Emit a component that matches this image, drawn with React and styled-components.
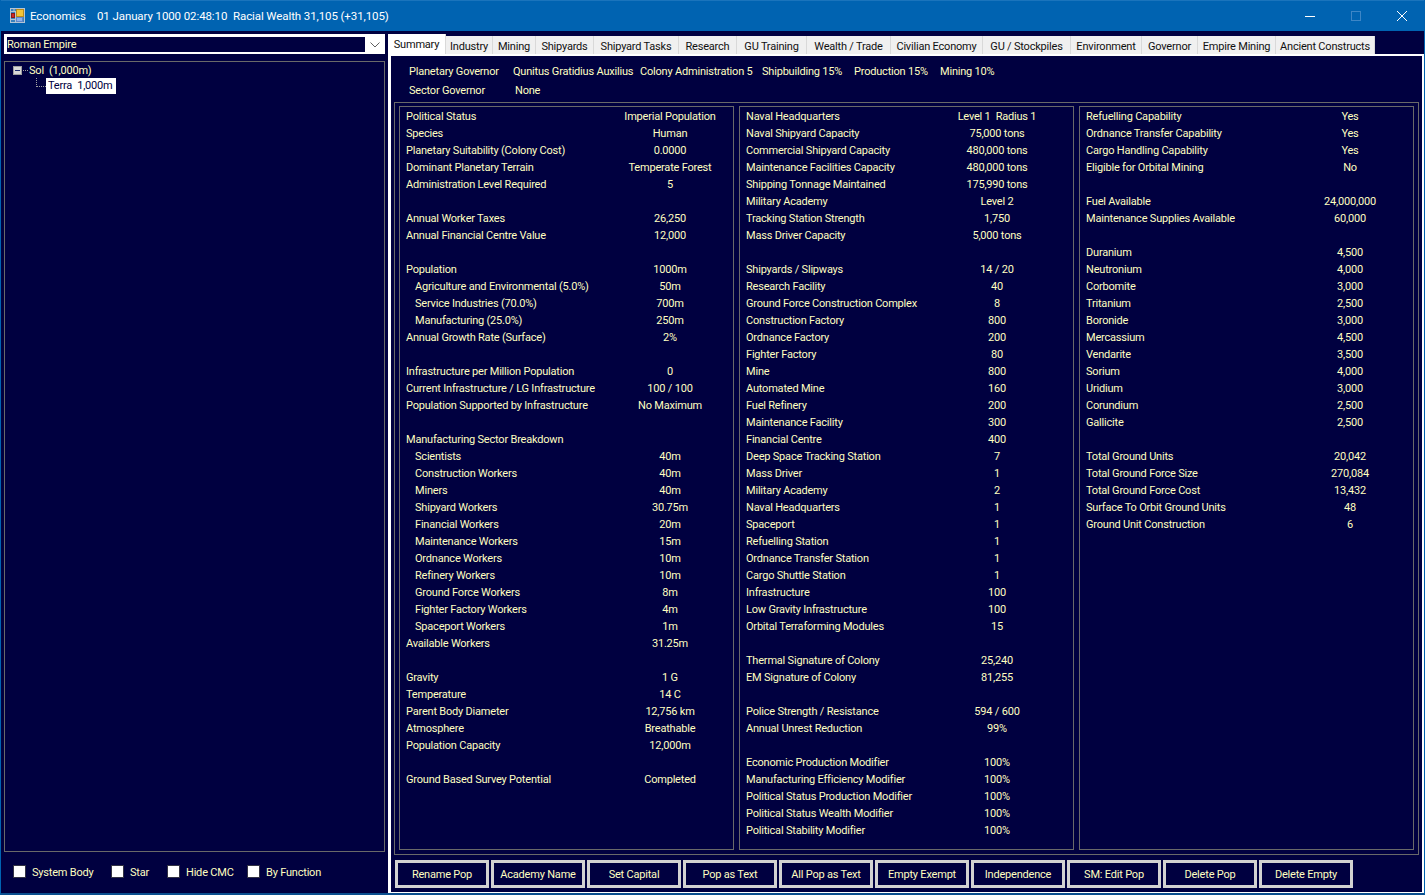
import React from 'react';
import styled, { createGlobalStyle } from 'styled-components';

const GlobalStyle = createGlobalStyle`
    html, body {
        margin: 0;
        padding: 0;
        background: #000040;
    }
    * {
        box-sizing: border-box;
    }
`;

const cream = '#FFFFC0';
const font = `Roboto, "Open Sans", sans-serif`;

const Window = styled.div`
    width: 1425px;
    height: 895px;
    display: flex;
    flex-direction: column;
    overflow: hidden;
    background: #000040;
    color: ${cream};
    font-family: ${font};
    font-size: 11px;
    letter-spacing: -0.2px;
    border-left: 1px solid #0063B1;
    border-right: 1px solid #0063B1;
    border-bottom: 2px solid #0A4F8F;
`;

const TitleBar = styled.header`
    height: 31px;
    margin: 0 -1px;
    flex: none;
    display: flex;
    align-items: center;
    padding-left: 10px;
    background: #0063B1;
    border-top: 1px solid #1A74BC;
    color: #FFFFFF;
    font-size: 11.5px;
    letter-spacing: -0.1px;
`;

const TitleIcon = styled.svg`
    width: 16px;
    height: 16px;
    margin-right: 4px;
`;

const TitlePart = styled.span`
    width: ${p => p.$w}px;
    flex: none;
    white-space: nowrap;
`;

const WinControls = styled.div`
    margin-left: auto;
    display: flex;
    height: 100%;
`;

const WinButton = styled.div`
    width: 46px;
    display: flex;
    align-items: center;
    justify-content: center;
`;

const Body = styled.div`
    flex: 1;
    min-height: 0;
    display: flex;
`;

const LeftPane = styled.aside`
    width: 387px;
    flex: none;
    display: flex;
    flex-direction: column;
    padding: 3px 3px 0 3px;
`;

const Combo = styled.div`
    height: 20px;
    flex: none;
    display: flex;
    background: #FFFFFF;
    padding: 3px 0 2px 3px;
`;

const ComboText = styled.div`
    flex: 1;
    background: #000040;
    line-height: 15px;
    white-space: nowrap;
`;

const ComboArrow = styled.div`
    width: 20px;
    display: flex;
    align-items: center;
    justify-content: center;
`;

const Tree = styled.div`
    flex: 1;
    margin-top: 7px;
    border: 1px solid #696969;
`;

const TreeRoot = styled.div`
    height: 16px;
    display: flex;
    align-items: center;
    padding-left: 8px;
`;

const Expander = styled.div`
    width: 9px;
    height: 9px;
    flex: none;
    display: flex;
    align-items: center;
    justify-content: center;
    background: #D8D8D8;
    border: 1px solid #A0A0A0;

    &::after {
        content: '';
        width: 5px;
        height: 1px;
        background: #1A2A6C;
    }
`;

const RootDots = styled.div`
    width: 5px;
    margin: 0 1px 0 1px;
    border-top: 1px dotted #A0A0A0;
`;

const RootLabel = styled.span`
    white-space: pre;
`;

const TreeChild = styled.div`
    display: flex;
    align-items: flex-start;
    padding-left: 31px;
`;

const ChildDots = styled.div`
    width: 10px;
    height: 9px;
    border-left: 1px dotted #A0A0A0;
    border-bottom: 1px dotted #A0A0A0;
`;

const Selected = styled.div`
    width: 70px;
    height: 16px;
    padding-left: 2px;
    line-height: 16px;
    background: #FFFFFF;
    color: #000040;
    white-space: pre;
`;

const CheckRow = styled.div`
    height: 41px;
    flex: none;
    display: flex;
    align-items: center;
    padding: 0 0 2px 9px;
`;

const CheckItem = styled.label`
    width: ${p => p.$w}px;
    flex: none;
    display: flex;
    align-items: center;
    white-space: nowrap;
`;

const CheckBox = styled.span`
    width: 13px;
    height: 13px;
    flex: none;
    margin-right: 6px;
    background: #FFFFFF;
    border: 1px solid #333344;
`;

const CheckText = styled.span`
    padding-top: 2px;
`;

const RightPane = styled.main`
    flex: 1;
    min-width: 0;
    display: flex;
    flex-direction: column;
`;

const TabStrip = styled.nav`
    height: 23px;
    flex: none;
    display: flex;
    align-items: flex-end;
`;

const Tab = styled.div`
    width: ${p => p.$w}px;
    height: ${p => (p.$active ? 20 : 18)}px;
    flex: none;
    display: flex;
    align-items: center;
    justify-content: center;
    padding-top: ${p => (p.$active ? 0 : 2)}px;
    background: ${p => (p.$active ? '#FFFFFF' : '#F0F0F0')};
    border-right: 1px solid #D9D9D9;
    color: #101010;
    white-space: nowrap;
`;

const Page = styled.section`
    flex: 1;
    min-height: 0;
    display: flex;
    flex-direction: column;
    border-style: solid;
    border-color: #FFFFFF;
    border-width: 2px 2px 1px 3px;
    padding: 0 3px;
`;

const GovernorBlock = styled.div`
    height: 46px;
    flex: none;
    padding: 6px 0 0 15px;
`;

const GovernorRow = styled.div`
    height: 19px;
    display: grid;
    grid-template-columns: 104px 127px 122px 92px 86px auto;
    align-items: center;
    white-space: nowrap;
`;

const GovernorName = styled.span`
    padding-left: 2px;
`;

const Group = styled.div`
    height: 753px;
    flex: none;
    display: flex;
    gap: 5px;
    padding: 3px 4px 4px;
    border: 1px solid #696969;
`;

const Panel = styled.div`
    width: 335px;
    flex: none;
    padding: 1px 0 0 6px;
    border: 1px solid #696969;
`;

const Row = styled.div`
    height: 17px;
    display: grid;
    grid-template-columns: minmax(0, 1fr) ${p => p.$valueWidth}px;
    align-items: center;
    white-space: nowrap;
`;

const Label = styled.span`
    padding-left: ${p => (p.$indent ? 9 : 0)}px;
`;

const Value = styled.span`
    text-align: center;
    white-space: pre;
`;

const ButtonRow = styled.div`
    display: flex;
    gap: 2px;
    margin-top: 5px;
    padding-left: 1px;
`;

const ActionButton = styled.button`
    width: 94px;
    height: 28px;
    padding: 0;
    background: #000040;
    border: 3px solid #D2D2D2;
    color: ${cream};
    font-family: ${font};
    font-size: 11px;
    letter-spacing: -0.2px;
    white-space: nowrap;
`;

const tabs = [
    ['Summary', 58], ['Industry', 47], ['Mining', 43], ['Shipyards', 58],
    ['Shipyard Tasks', 85], ['Research', 58], ['GU Training', 70],
    ['Wealth / Trade', 84], ['Civilian Economy', 92], ['GU / Stockpiles', 88],
    ['Environment', 71], ['Governor', 56], ['Empire Mining', 78],
    ['Ancient Constructs', 99],
];

const buttons = [
    'Rename Pop', 'Academy Name', 'Set Capital', 'Pop as Text', 'All Pop as Text',
    'Empty Exempt', 'Independence', 'SM: Edit Pop', 'Delete Pop', 'Delete Empty',
];

const checks = [['System Body', 98], ['Star', 56], ['Hide CMC', 80], ['By Function', 130]];

// null is an empty line, a third item true indents the label
const col1 = [
    ['Political Status', 'Imperial Population'],
    ['Species', 'Human'],
    ['Planetary Suitability (Colony Cost)', '0.0000'],
    ['Dominant Planetary Terrain', 'Temperate Forest'],
    ['Administration Level Required', '5'],
    null,
    ['Annual Worker Taxes', '26,250'],
    ['Annual Financial Centre Value', '12,000'],
    null,
    ['Population', '1000m'],
    ['Agriculture and Environmental (5.0%)', '50m', true],
    ['Service Industries (70.0%)', '700m', true],
    ['Manufacturing (25.0%)', '250m', true],
    ['Annual Growth Rate (Surface)', '2%'],
    null,
    ['Infrastructure per Million Population', '0'],
    ['Current Infrastructure / LG Infrastructure', '100 / 100'],
    ['Population Supported by Infrastructure', 'No Maximum'],
    null,
    ['Manufacturing Sector Breakdown', ''],
    ['Scientists', '40m', true],
    ['Construction Workers', '40m', true],
    ['Miners', '40m', true],
    ['Shipyard Workers', '30.75m', true],
    ['Financial Workers', '20m', true],
    ['Maintenance Workers', '15m', true],
    ['Ordnance Workers', '10m', true],
    ['Refinery Workers', '10m', true],
    ['Ground Force Workers', '8m', true],
    ['Fighter Factory Workers', '4m', true],
    ['Spaceport Workers', '1m', true],
    ['Available Workers', '31.25m'],
    null,
    ['Gravity', '1 G'],
    ['Temperature', '14 C'],
    ['Parent Body Diameter', '12,756 km'],
    ['Atmosphere', 'Breathable'],
    ['Population Capacity', '12,000m'],
    null,
    ['Ground Based Survey Potential', 'Completed'],
];

const col2 = [
    ['Naval Headquarters', 'Level 1  Radius 1'],
    ['Naval Shipyard Capacity', '75,000 tons'],
    ['Commercial Shipyard Capacity', '480,000 tons'],
    ['Maintenance Facilities Capacity', '480,000 tons'],
    ['Shipping Tonnage Maintained', '175,990 tons'],
    ['Military Academy', 'Level 2'],
    ['Tracking Station Strength', '1,750'],
    ['Mass Driver Capacity', '5,000 tons'],
    null,
    ['Shipyards / Slipways', '14 / 20'],
    ['Research Facility', '40'],
    ['Ground Force Construction Complex', '8'],
    ['Construction Factory', '800'],
    ['Ordnance Factory', '200'],
    ['Fighter Factory', '80'],
    ['Mine', '800'],
    ['Automated Mine', '160'],
    ['Fuel Refinery', '200'],
    ['Maintenance Facility', '300'],
    ['Financial Centre', '400'],
    ['Deep Space Tracking Station', '7'],
    ['Mass Driver', '1'],
    ['Military Academy', '2'],
    ['Naval Headquarters', '1'],
    ['Spaceport', '1'],
    ['Refuelling Station', '1'],
    ['Ordnance Transfer Station', '1'],
    ['Cargo Shuttle Station', '1'],
    ['Infrastructure', '100'],
    ['Low Gravity Infrastructure', '100'],
    ['Orbital Terraforming Modules', '15'],
    null,
    ['Thermal Signature of Colony', '25,240'],
    ['EM Signature of Colony', '81,255'],
    null,
    ['Police Strength / Resistance', '594 / 600'],
    ['Annual Unrest Reduction', '99%'],
    null,
    ['Economic Production Modifier', '100%'],
    ['Manufacturing Efficiency Modifier', '100%'],
    ['Political Status Production Modifier', '100%'],
    ['Political Status Wealth Modifier', '100%'],
    ['Political Stability Modifier', '100%'],
];

const col3 = [
    ['Refuelling Capability', 'Yes'],
    ['Ordnance Transfer Capability', 'Yes'],
    ['Cargo Handling Capability', 'Yes'],
    ['Eligible for Orbital Mining', 'No'],
    null,
    ['Fuel Available', '24,000,000'],
    ['Maintenance Supplies Available', '60,000'],
    null,
    ['Duranium', '4,500'],
    ['Neutronium', '4,000'],
    ['Corbomite', '3,000'],
    ['Tritanium', '2,500'],
    ['Boronide', '3,000'],
    ['Mercassium', '4,500'],
    ['Vendarite', '3,500'],
    ['Sorium', '4,000'],
    ['Uridium', '3,000'],
    ['Corundium', '2,500'],
    ['Gallicite', '2,500'],
    null,
    ['Total Ground Units', '20,042'],
    ['Total Ground Force Size', '270,084'],
    ['Total Ground Force Cost', '13,432'],
    ['Surface To Orbit Ground Units', '48'],
    ['Ground Unit Construction', '6'],
];

const panels = [
    { rows: col1, valueWidth: 126 },
    { rows: col2, valueWidth: 152 },
    { rows: col3, valueWidth: 126 },
];

const AppIcon = () => (
    <TitleIcon viewBox="0 0 16 16">
        <rect x="0.5" y="0.5" width="14" height="14" fill="#3B82BE" stroke="#B4C4D4" />
        <path d="M0.5 3.5H14.5M4 0.5V3.5M0.5 11.5H5.5M5.5 3.5V14.5" stroke="#B4C4D4" fill="none" />
        <rect x="6.5" y="1.5" width="7" height="7" fill="#F2C438" stroke="#B98A18" />
        <rect x="1.5" y="5.5" width="3" height="4" fill="#D02828" stroke="#8A1818" />
        <rect x="6.5" y="9.5" width="6" height="4" fill="#8CB0EA" stroke="#5F86C8" />
    </TitleIcon>
);

const App = () => {
    return (
        <Window>
            <GlobalStyle />
            <TitleBar>
                <AppIcon />
                <TitlePart $w={67}>Economics</TitlePart>
                <TitlePart $w={136}>01 January 1000 02:48:10</TitlePart>
                <TitlePart $w={170}>Racial Wealth 31,105 (+31,105)</TitlePart>
                <WinControls>
                    <WinButton>
                        <svg width="10" height="10" viewBox="0 0 10 10">
                            <path d="M0 5.5H10" stroke="#fff" fill="none" />
                        </svg>
                    </WinButton>
                    <WinButton>
                        <svg width="10" height="10" viewBox="0 0 10 10">
                            <rect x="0.5" y="0.5" width="9" height="9" stroke="#3D86C6" fill="none" />
                        </svg>
                    </WinButton>
                    <WinButton>
                        <svg width="10" height="10" viewBox="0 0 10 10">
                            <path d="M0 0L10 10M10 0L0 10" stroke="#fff" fill="none" />
                        </svg>
                    </WinButton>
                </WinControls>
            </TitleBar>
            <Body>
                <LeftPane>
                    <Combo>
                        <ComboText>Roman Empire</ComboText>
                        <ComboArrow>
                            <svg width="10" height="6" viewBox="0 0 10 6">
                                <path d="M0.5 0.5L5 5L9.5 0.5" stroke="#606060" fill="none" />
                            </svg>
                        </ComboArrow>
                    </Combo>
                    <Tree>
                        <TreeRoot>
                            <Expander />
                            <RootDots />
                            <RootLabel>Sol  (1,000m)</RootLabel>
                        </TreeRoot>
                        <TreeChild>
                            <ChildDots />
                            <Selected>Terra  1,000m</Selected>
                        </TreeChild>
                    </Tree>
                    <CheckRow>
                        {checks.map(([name, w]) => (
                            <CheckItem key={name} $w={w}>
                                <CheckBox />
                                <CheckText>{name}</CheckText>
                            </CheckItem>
                        ))}
                    </CheckRow>
                </LeftPane>
                <RightPane>
                    <TabStrip>
                        {tabs.map(([name, w], i) => (
                            <Tab key={name} $w={w} $active={i === 0}>{name}</Tab>
                        ))}
                    </TabStrip>
                    <Page>
                        <GovernorBlock>
                            <GovernorRow>
                                <span>Planetary Governor</span>
                                <span>Qunitus Gratidius Auxilius</span>
                                <span>Colony Administration 5</span>
                                <span>Shipbuilding 15%</span>
                                <span>Production 15%</span>
                                <span>Mining 10%</span>
                            </GovernorRow>
                            <GovernorRow>
                                <span>Sector Governor</span>
                                <GovernorName>None</GovernorName>
                            </GovernorRow>
                        </GovernorBlock>
                        <Group>
                            {panels.map(({ rows, valueWidth }, p) => (
                                <Panel key={p}>
                                    {rows.map((row, i) => (
                                        <Row key={i} $valueWidth={valueWidth}>
                                            {row && <Label $indent={row[2]}>{row[0]}</Label>}
                                            {row && <Value>{row[1]}</Value>}
                                        </Row>
                                    ))}
                                </Panel>
                            ))}
                        </Group>
                        <ButtonRow>
                            {buttons.map(name => (
                                <ActionButton key={name}>{name}</ActionButton>
                            ))}
                        </ButtonRow>
                    </Page>
                </RightPane>
            </Body>
        </Window>
    );
};

export default App;
